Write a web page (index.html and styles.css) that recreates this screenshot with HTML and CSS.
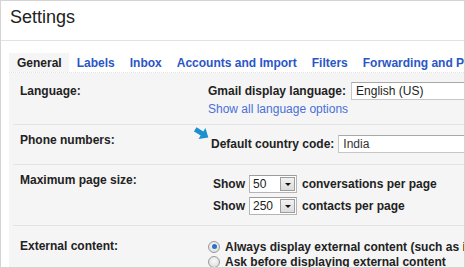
FILE: index.html
```html
<!DOCTYPE html>
<html>
<head>
<meta charset="utf-8">
<link rel="stylesheet" href="styles.css">
</head>
<body>
<div class="frame">
  <header class="title">Settings</header>
  <div class="main">
    <nav class="tabs">
      <span class="tab active">General</span>
      <span class="tab">Labels</span>
      <span class="tab">Inbox</span>
      <span class="tab">Accounts and Import</span>
      <span class="tab">Filters</span>
      <span class="tab">Forwarding and POP/IMAP</span>
    </nav>
    <div class="panel">
      <div class="row row-lang">
        <div class="label">Language:</div>
        <div class="value">
          <div class="line">
            <span class="strong">Gmail display language:</span>
            <span class="textbox lang-box">English (US)</span>
          </div>
          <a class="link">Show all language options</a>
        </div>
      </div>
      <div class="row row-phone">
        <div class="label">Phone numbers:</div>
        <div class="value">
          <svg class="pointer" width="16" height="15" viewBox="0 0 16 15">
            <g transform="rotate(32 8 7.5)">
              <polygon points="0,5 8,5 8,1 15.5,7.5 8,14 8,10 0,10" fill="#1d8fd1"/>
            </g>
          </svg>
          <div class="line line-phone">
            <span class="strong">Default country code:</span>
            <span class="textbox phone-box">India</span>
          </div>
        </div>
      </div>
      <div class="row row-size">
        <div class="label">Maximum page size:</div>
        <div class="value">
          <div class="line line-size">
            <span class="strong">Show</span>
            <span class="combo"><span class="combo-text">50</span><span class="combo-btn"><span class="tri"></span></span></span>
            <span class="strong">conversations per page</span>
          </div>
          <div class="line line-size">
            <span class="strong">Show</span>
            <span class="combo"><span class="combo-text">250</span><span class="combo-btn"><span class="tri"></span></span></span>
            <span class="strong">contacts per page</span>
          </div>
        </div>
      </div>
      <div class="row row-ext">
        <div class="label">External content:</div>
        <div class="value">
          <div class="radio-line"><span class="radio checked"></span><span class="strong">Always display external content (such as images)</span></div>
          <div class="radio-line"><span class="radio"></span><span class="strong">Ask before displaying external content</span></div>
        </div>
      </div>
    </div>
  </div>
</div>
</body>
</html>
```
FILE: styles.css
```css
* { box-sizing: border-box; }
html, body { margin: 0; padding: 0; background: #fff; }
body { font-family: Arial, "Liberation Sans", sans-serif; font-size: 12px; color: #222; }

.frame {
  width: 465px;
  height: 268px;
  border: 1px solid #d4d4d4;
  overflow: hidden;
}

.title {
  height: 40px;
  padding: 5px 0 0 9px;
  font-size: 18px;
  line-height: 22px;
  color: #222;
  border-bottom: 1px solid #e2e2e2;
}

.main { padding: 12px 0 0 8px; }

.tabs {
  display: flex;
  height: 20px;
  white-space: nowrap;
  border-bottom: 1px dotted #e4e4e4;
}
.tab {
  padding: 0 7px 0 8px;
  line-height: 20px;
  font-weight: bold;
  color: #2a56c6;
}
.tab.active { background: #f5f5f5; color: #222; }

.panel { background: #f5f5f5; height: 200px; }

.row {
  display: flex;
  margin-left: 4px;
  padding-left: 7px;
  border-top: 1px solid #e3e3e3;
  white-space: nowrap;
}
.row-lang { border-top: none; padding-top: 9px; padding-bottom: 7px; }
.row-phone { padding-top: 10px; padding-bottom: 11px; }
.row-size { padding-top: 10px; padding-bottom: 10px; }
.row-ext { padding-top: 13px; }

.label {
  width: 188px;
  flex-shrink: 0;
  font-weight: bold;
  line-height: 15px;
}
.row-lang .label { padding-top: 2px; }
.row-phone .label { margin-top: -2px; }
.row-size .label { margin-top: -2px; }

.value { position: relative; flex: 1; }
.strong { font-weight: bold; }

.line { display: flex; align-items: center; height: 18px; }
.lang-box { margin-left: 5px; width: 140px; }
.textbox {
  display: inline-block;
  height: 18px;
  line-height: 16px;
  padding: 0 4px;
  background: #fff;
  border: 1px solid #c6c6c6;
  border-top-color: #a8a8a8;
  font-weight: normal;
  color: #222;
}
.link { display: block; line-height: 15px; margin-top: 2px; color: #4a6fd8; }

.pointer { position: absolute; left: -14px; top: -9px; }
.line-phone { padding-left: 3px; }
.phone-box { margin-left: 4px; width: 140px; color: #333; }

.line-size { padding-left: 5px; }
.line-size + .line-size { margin-top: 4px; }
.combo {
  display: inline-flex;
  height: 18px;
  margin: 0 5px 0 4px;
  background: #fff;
  border: 1px solid #b5b5b5;
  border-top-color: #9c9c9c;
}
.combo-text { width: 29px; padding-left: 3px; line-height: 16px; font-weight: normal; }
.combo-btn {
  width: 15px;
  margin: 1px;
  background: linear-gradient(#f2f2f2, #dcdcdc);
  border: 1px solid #9d9d9d;
  display: flex;
  align-items: center;
  justify-content: center;
}
.tri {
  width: 0; height: 0;
  border-left: 3px solid transparent;
  border-right: 3px solid transparent;
  border-top: 3px solid #111;
}

.radio-line { display: flex; align-items: center; height: 15px; }
.radio {
  width: 12px; height: 12px;
  margin-right: 5px;
  border-radius: 50%;
  border: 1px solid #9a9a9a;
  background: radial-gradient(circle at 50% 40%, #fafafa, #d8d8d8);
  position: relative;
}
.radio.checked::after {
  content: "";
  position: absolute;
  left: 2.5px; top: 2.5px;
  width: 5px; height: 5px;
  border-radius: 50%;
  background: #2a73c8;
}
```
